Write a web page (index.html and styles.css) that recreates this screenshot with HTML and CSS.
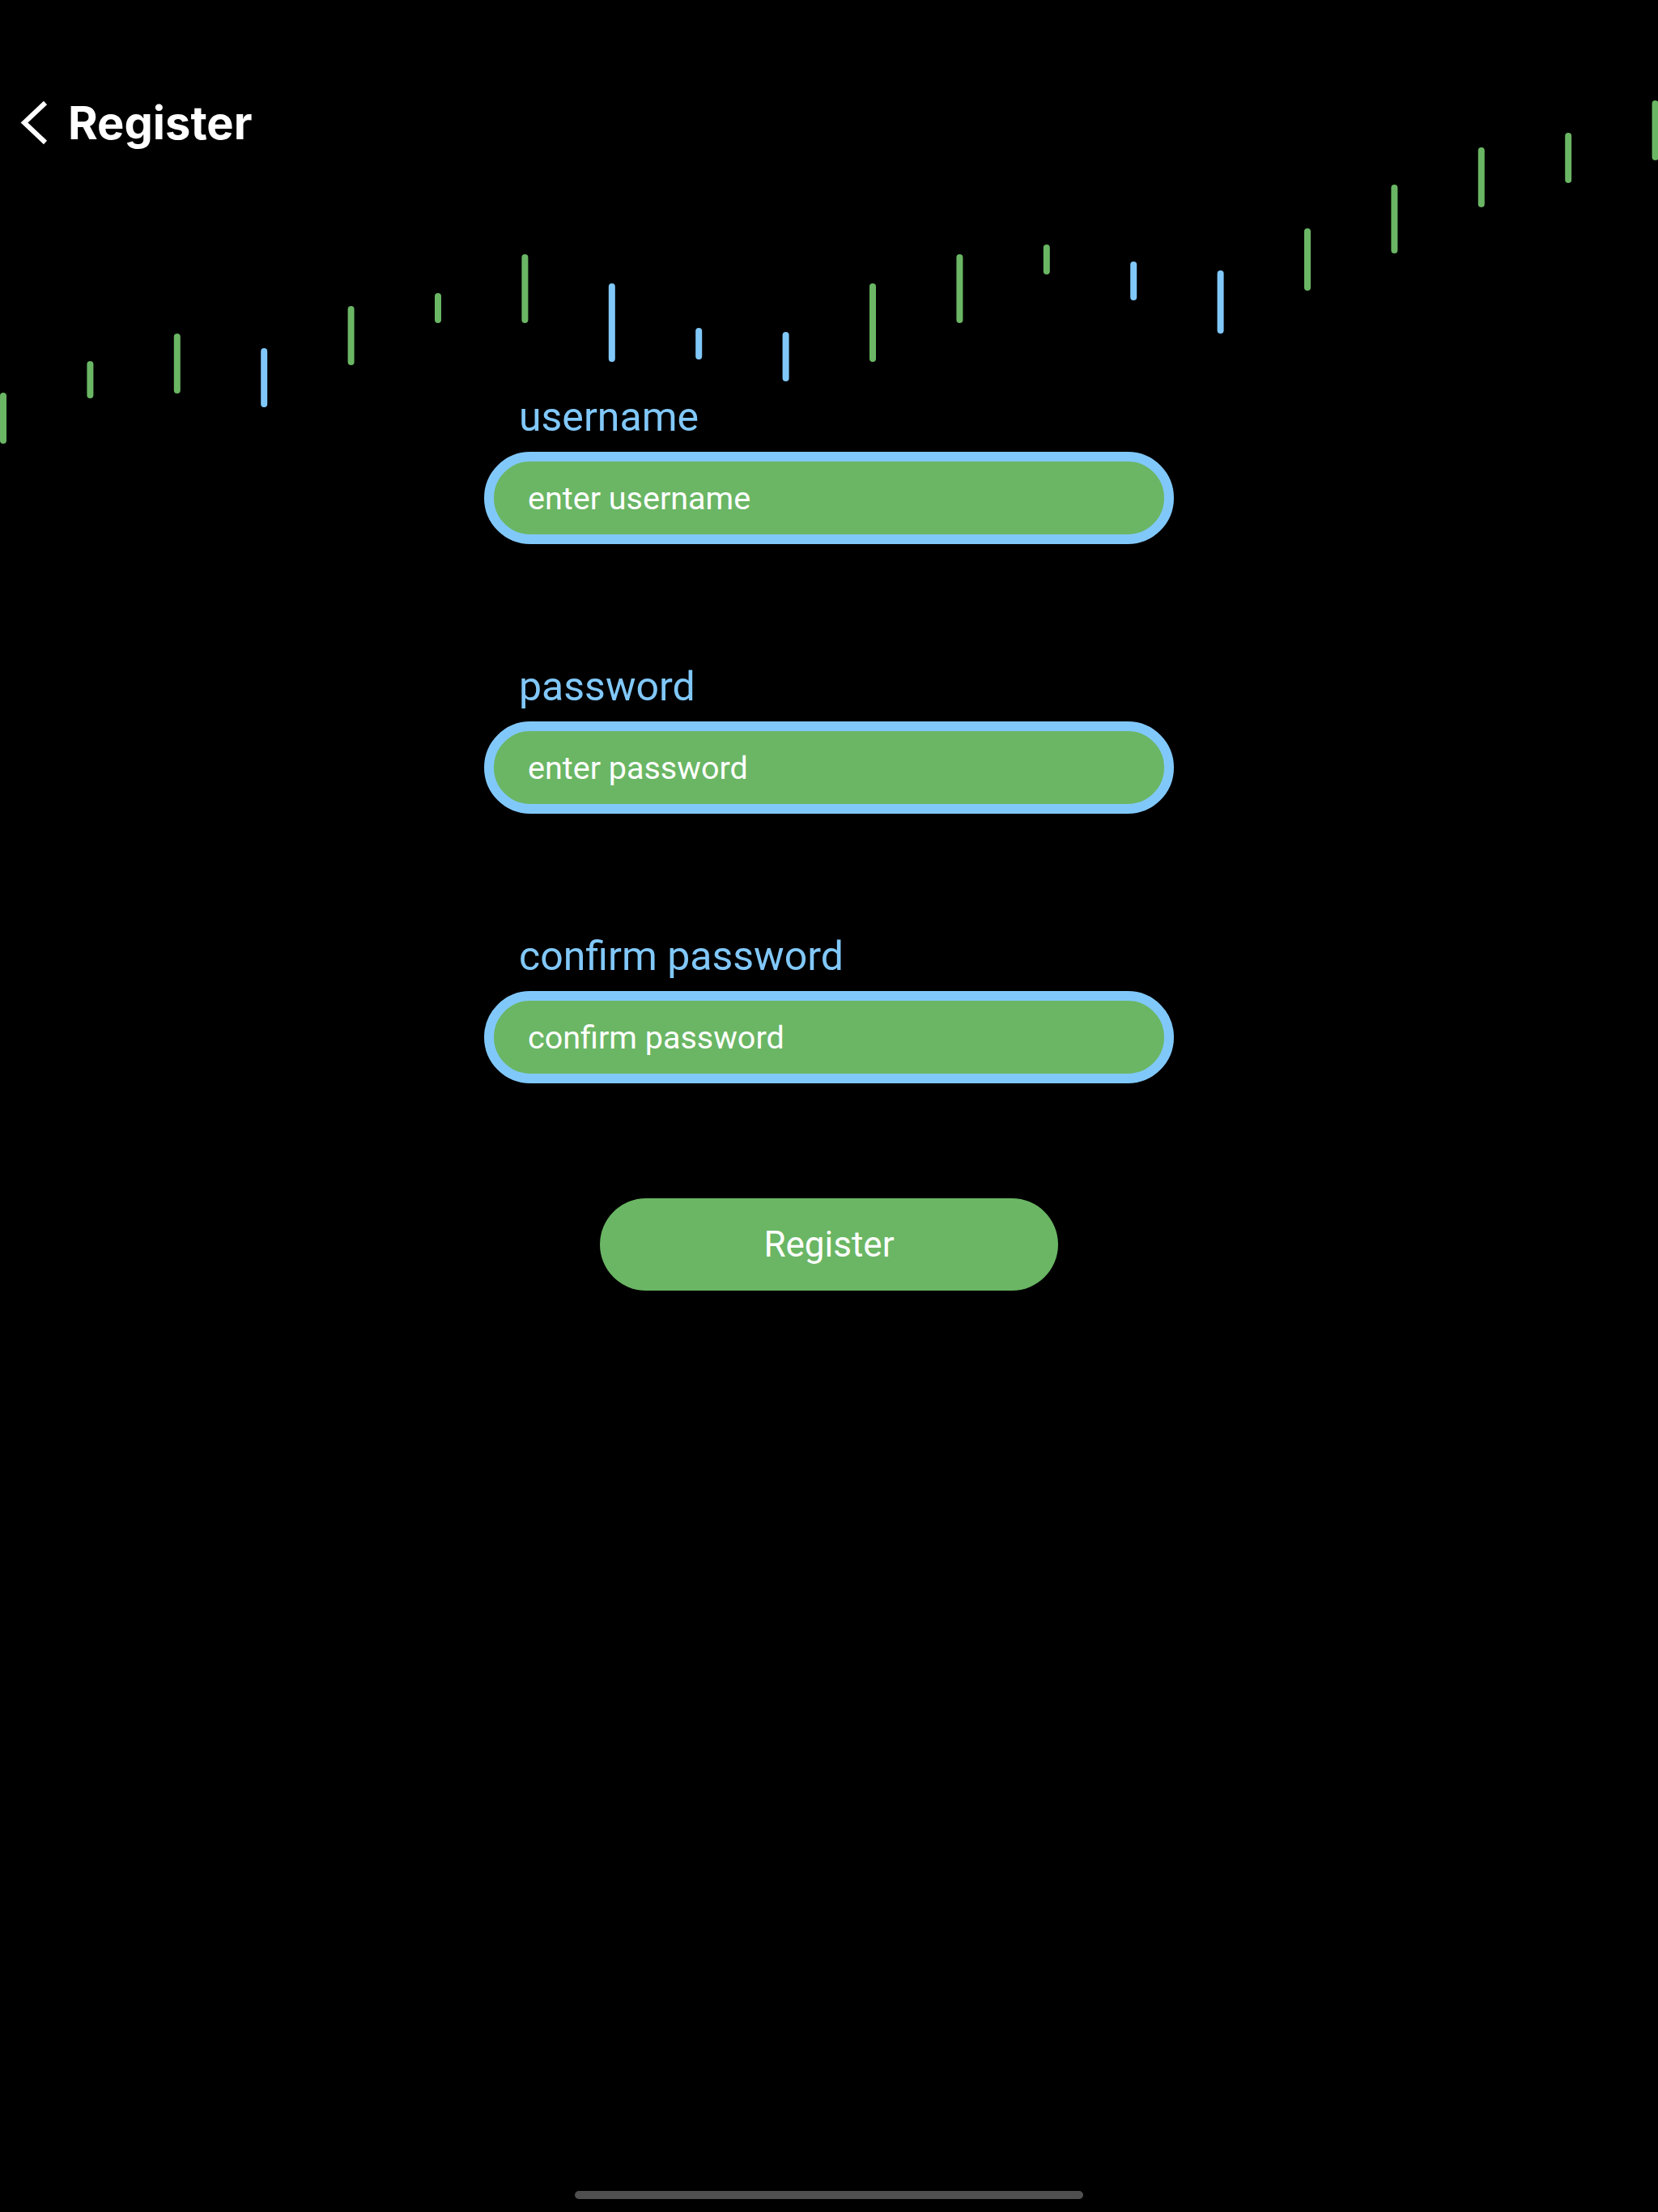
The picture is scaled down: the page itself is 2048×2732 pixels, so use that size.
FILE: index.html
```html
<!DOCTYPE html>
<html lang="en">
<head>
<meta charset="utf-8">
<title>Register</title>
<link rel="stylesheet" href="styles.css">
</head>
<body>
<div class="screen">
  <svg class="chart" width="2048" height="560" viewBox="0 0 2048 560" aria-hidden="true">
    <g class="up">
      <rect x="0" y="485" width="8" height="63" rx="4"/>
      <rect x="107.4" y="446" width="8" height="46" rx="4"/>
      <rect x="214.8" y="412" width="8" height="74" rx="4"/>
      <rect x="429.6" y="378" width="8" height="73" rx="4"/>
      <rect x="537" y="362" width="8" height="37" rx="4"/>
      <rect x="644.4" y="314" width="8" height="85" rx="4"/>
      <rect x="1074" y="350" width="8" height="97" rx="4"/>
      <rect x="1181.4" y="314" width="8" height="85" rx="4"/>
      <rect x="1288.8" y="302" width="8" height="37" rx="4"/>
      <rect x="1611" y="282" width="8" height="77" rx="4"/>
      <rect x="1718.4" y="228" width="8" height="85" rx="4"/>
      <rect x="1825.8" y="182" width="8" height="74" rx="4"/>
      <rect x="1933.2" y="164" width="8" height="62" rx="4"/>
      <rect x="2040.6" y="124" width="8" height="74" rx="4"/>
    </g>
    <g class="down">
      <rect x="322.2" y="430" width="8" height="73" rx="4"/>
      <rect x="751.8" y="350" width="8" height="97" rx="4"/>
      <rect x="859.2" y="405" width="8" height="39" rx="4"/>
      <rect x="966.6" y="410" width="8" height="61" rx="4"/>
      <rect x="1396.2" y="323" width="8" height="48" rx="4"/>
      <rect x="1503.6" y="334" width="8" height="78" rx="4"/>
    </g>
  </svg>

  <div class="content">
    <header class="nav">
      <svg class="back" width="40" height="60" viewBox="0 0 40 60" aria-hidden="true">
        <polyline points="36,5 10,29.5 36,54"/>
      </svg>
      <h1 class="title">Register</h1>
    </header>

    <form class="form">
      <div class="fields">
        <label class="field">
          <span class="label">username</span>
          <input class="input" type="text" placeholder="enter username">
        </label>
        <label class="field">
          <span class="label">password</span>
          <input class="input" type="password" placeholder="enter password">
        </label>
        <label class="field">
          <span class="label">confirm password</span>
          <input class="input" type="password" placeholder="confirm password">
        </label>
      </div>
      <div class="actions">
        <button class="submit" type="button">Register</button>
      </div>
    </form>

    <div class="home-indicator"></div>
  </div>
</div>
</body>
</html>
```

FILE: styles.css
```css
html, body {
  margin: 0;
  padding: 0;
  background: #000;
}

.screen {
  display: grid;
  width: 2048px;
  min-height: 2732px;
  overflow: hidden;
}

.chart,
.content {
  grid-area: 1 / 1;
}

.chart {
  display: block;
  align-self: start;
  pointer-events: none;
}

.chart .up rect {
  fill: #6ab664;
}

.chart .down rect {
  fill: #81c8fa;
}

.content {
  display: flex;
  flex-direction: column;
  min-height: 2732px;
}

.nav {
  display: flex;
  align-items: center;
  gap: 24px;
  padding: 118px 0 0 20px;
}

.back {
  display: block;
}

.back polyline {
  fill: none;
  stroke: #fff;
  stroke-width: 6;
  stroke-linejoin: miter;
  stroke-linecap: butt;
}

.title {
  margin: 0;
  font-family: Inter, "Liberation Sans", sans-serif;
  font-weight: 700;
  font-size: 56px;
  line-height: 68px;
  color: #fff;
  letter-spacing: 0;
}

.form {
  width: 852px;
  margin: 301px auto 0;
}

.fields {
  display: flex;
  flex-direction: column;
  gap: 148px;
}

.field {
  display: flex;
  flex-direction: column;
  gap: 15px;
}

.label {
  padding-left: 43px;
  font-family: Roboto, "Liberation Sans", sans-serif;
  font-size: 50px;
  line-height: 56px;
  color: #81c8fa;
}

.input {
  box-sizing: border-box;
  width: 100%;
  height: 114px;
  margin: 0;
  padding: 0 42px;
  border: 12px solid #81c8fa;
  border-radius: 57px;
  background: #6ab664;
  color: #fff;
  font-family: Roboto, "Liberation Sans", sans-serif;
  font-size: 39.5px;
  outline: none;
}

.input::placeholder {
  color: #fff;
  opacity: 1;
}

.actions {
  display: flex;
  justify-content: center;
  padding-top: 142px;
}

.submit {
  width: 566px;
  height: 114px;
  border: 0;
  border-radius: 57px;
  background: #6ab664;
  color: #fff;
  font-family: Roboto, "Liberation Sans", sans-serif;
  font-size: 44px;
  padding: 0;
}

.home-indicator {
  width: 628px;
  height: 10px;
  border-radius: 5px;
  background: #4f4f4f;
  margin: auto auto 16px;
}
```
